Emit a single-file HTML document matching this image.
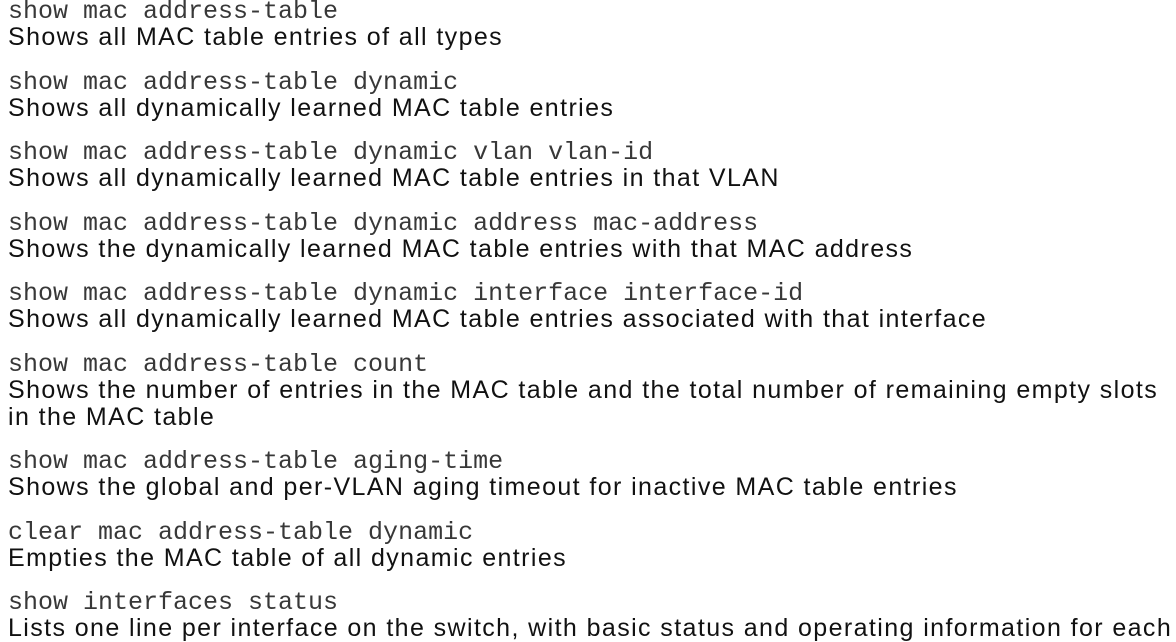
<!DOCTYPE html>
<html><head><meta charset="utf-8"><style>
html,body{margin:0;padding:0;background:#fff;width:1176px;height:642px;overflow:hidden}
body{padding:0 0 0 8px;box-sizing:border-box}
.e{margin-bottom:19.5px}
.c{font-family:"Liberation Mono",monospace;font-size:25px;line-height:24px;height:24px;color:#383838;white-space:pre;margin-top:-2px;padding-top:2px;margin-bottom:0px}
.d{font-family:"Liberation Sans",sans-serif;font-size:25px;letter-spacing:1.4px;line-height:27px;color:#111;white-space:nowrap}
</style></head><body>
<div class="e"><div class="c">show mac address-table</div><div class="d">Shows all MAC table entries of all types</div></div>
<div class="e"><div class="c">show mac address-table dynamic</div><div class="d">Shows all dynamically learned MAC table entries</div></div>
<div class="e"><div class="c">show mac address-table dynamic vlan vlan-id</div><div class="d">Shows all dynamically learned MAC table entries in that VLAN</div></div>
<div class="e"><div class="c">show mac address-table dynamic address mac-address</div><div class="d">Shows the dynamically learned MAC table entries with that MAC address</div></div>
<div class="e"><div class="c">show mac address-table dynamic interface interface-id</div><div class="d">Shows all dynamically learned MAC table entries associated with that interface</div></div>
<div class="e"><div class="c">show mac address-table count</div><div class="d">Shows the number of entries in the MAC table and the total number of remaining empty slots<br>in the MAC table</div></div>
<div class="e"><div class="c">show mac address-table aging-time</div><div class="d">Shows the global and per-VLAN aging timeout for inactive MAC table entries</div></div>
<div class="e"><div class="c">clear mac address-table dynamic</div><div class="d">Empties the MAC table of all dynamic entries</div></div>
<div class="e"><div class="c">show interfaces status</div><div class="d">Lists one line per interface on the switch, with basic status and operating information for each</div></div>
</body></html>
